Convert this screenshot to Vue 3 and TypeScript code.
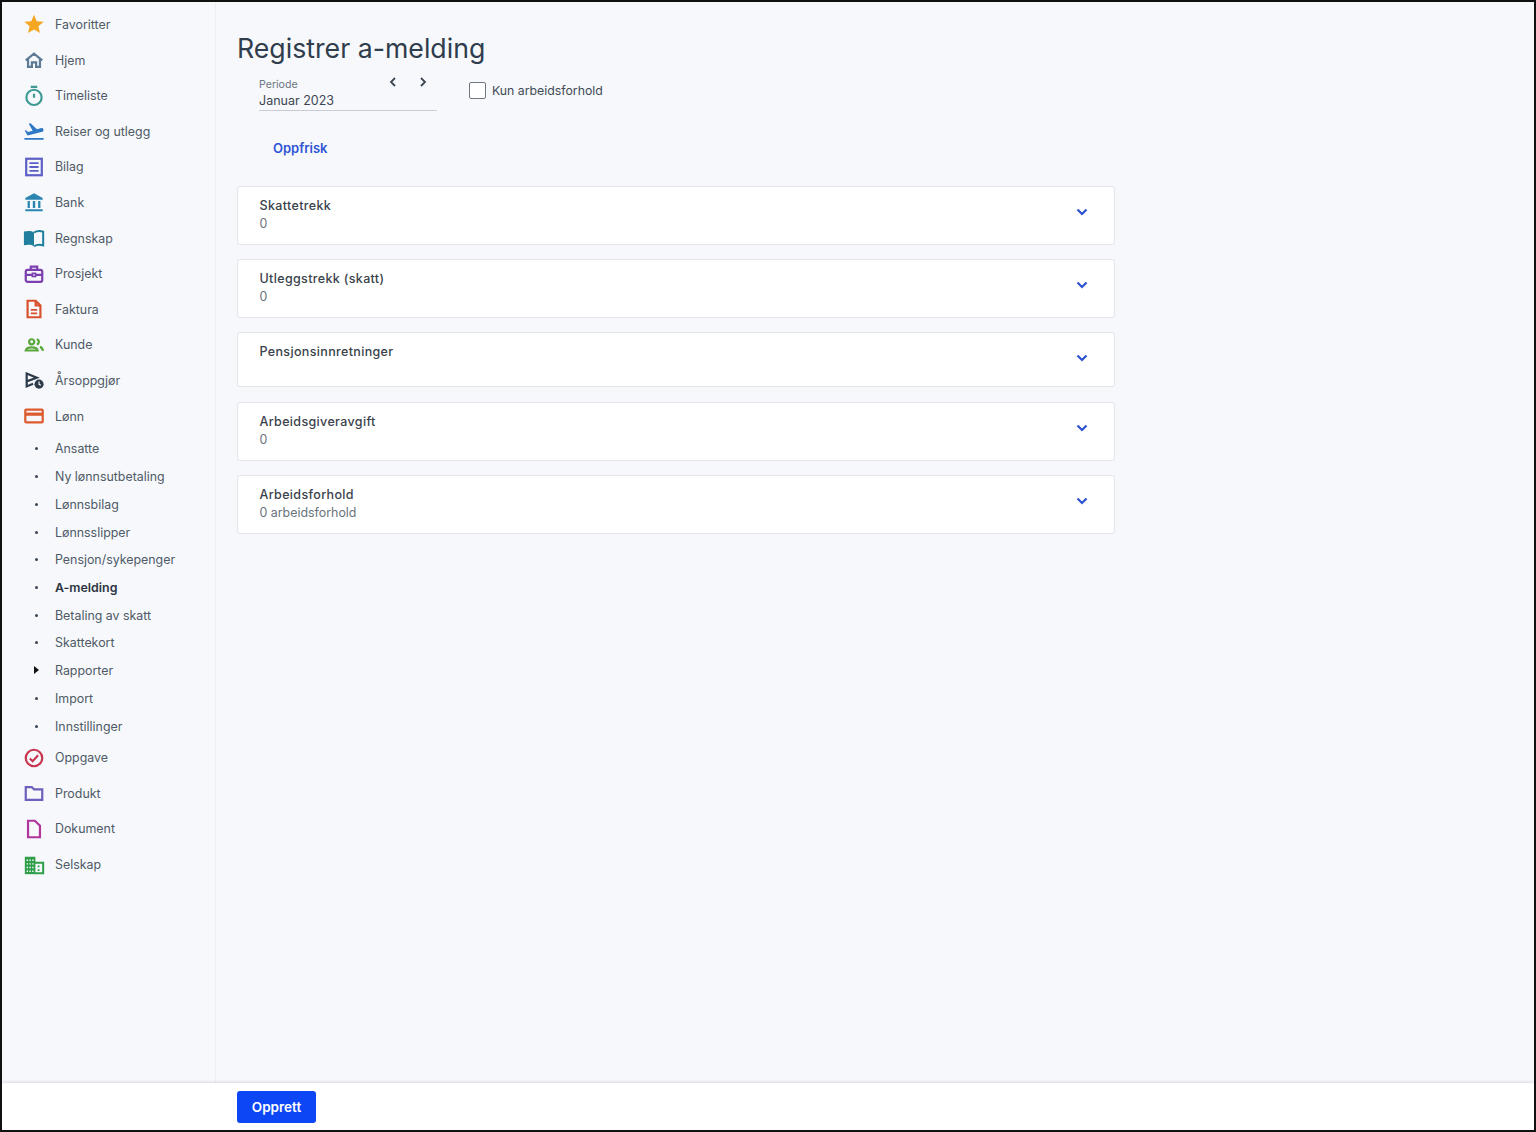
<script setup lang="ts">
interface NavItem { label: string; icon: string; color: string }
const top: NavItem[] = [
  { label: 'Favoritter', icon: 'star', color: '#f5a623' },
  { label: 'Hjem', icon: 'home', color: '#5f7a94' },
  { label: 'Timeliste', icon: 'timer', color: '#3f9a94' },
  { label: 'Reiser og utlegg', icon: 'plane', color: '#2f78c4' },
  { label: 'Bilag', icon: 'doc', color: '#5c5fc4' },
  { label: 'Bank', icon: 'bank', color: '#2a86b0' },
  { label: 'Regnskap', icon: 'book', color: '#1f7f9c' },
  { label: 'Prosjekt', icon: 'case', color: '#7b3fb0' },
  { label: 'Faktura', icon: 'invoice', color: '#d9512c' },
  { label: 'Kunde', icon: 'people', color: '#5aa83c' },
  { label: 'Årsoppgjør', icon: 'year', color: '#2d3a4a' },
  { label: 'Lønn', icon: 'card', color: '#dc5a2e' },
]
const subs = ['Ansatte', 'Ny lønnsutbetaling', 'Lønnsbilag', 'Lønnsslipper', 'Pensjon/sykepenger', 'A-melding', 'Betaling av skatt', 'Skattekort', 'Rapporter', 'Import', 'Innstillinger']
const bottom: NavItem[] = [
  { label: 'Oppgave', icon: 'check', color: '#c8364f' },
  { label: 'Produkt', icon: 'folder', color: '#6c60bd' },
  { label: 'Dokument', icon: 'file', color: '#b0359c' },
  { label: 'Selskap', icon: 'company', color: '#2f9e48' },
]
const panels = [
  { title: 'Skattetrekk', sub: '0' },
  { title: 'Utleggstrekk (skatt)', sub: '0' },
  { title: 'Pensjonsinnretninger', sub: '' },
  { title: 'Arbeidsgiveravgift', sub: '0' },
  { title: 'Arbeidsforhold', sub: '0 arbeidsforhold' },
]
</script>

<template>
  <div class="frame">
    <div class="body">
      <aside class="side">
        <nav class="nav">
          <a v-for="it in top" :key="it.label" class="row">
            <svg class="ico" viewBox="0 0 24 24" :style="{ color: it.color }">
              <path v-if="it.icon === 'star'" fill="currentColor" d="M12 2l3 6.900 7.500.7-5.700 4.900 1.700 7.300L12 17.900 5.500 21.800l1.700-7.300L1.500 9.600l7.500-.7z" />
              <path v-else-if="it.icon === 'home'" fill="none" stroke="currentColor" stroke-width="2.400" d="M3 12.500L12 5l9 7.500M5.500 11v8.500h4.200v-5h4.600v5h4.200V11" />
              <g v-else-if="it.icon === 'timer'" fill="none" stroke="currentColor" stroke-width="2.400">
                <circle cx="12" cy="13.500" r="8.300" /><path d="M8.500 2h7M12 9.500v4.500" />
              </g>
              <path v-else-if="it.icon === 'plane'" fill="currentColor" d="M1.500 19.500h21v2h-21zM22.300 10.500c.3 1-.3 1.900-1.200 2.200L5 17 1.800 11.500l1.500-.4 2.200 1.900 5-1.300L6.300 4.100l1.900-.5 7 6.500 5-1.300c.9-.3 1.900.3 2.100 1.700z" />
              <g v-else-if="it.icon === 'doc'" fill="none" stroke="currentColor" stroke-width="2.400">
                <rect x="3.500" y="3" width="17" height="18" /><path stroke-width="2" d="M7 7.700h10M7 12h10M7 16.300h10" />
              </g>
              <g v-else-if="it.icon === 'bank'" fill="currentColor">
                <path d="M12 2.500L21.500 7.500v2h-19v-2zM2.500 20h19v2h-19zM5 11h2.500v7.500H5zM10.700 11h2.600v7.500h-2.600zM16.500 11H19v7.500h-2.500z" />
              </g>
              <g v-else-if="it.icon === 'book'">
                <path fill="currentColor" d="M1 5C5 4 9 4 12 6v15c-3-2-7-2-11-1z" />
                <path fill="none" stroke="currentColor" stroke-width="2.200" d="M12 6c3-2 7-2 10-1v15c-3-1-7-1-10 1" />
              </g>
              <g v-else-if="it.icon === 'case'" fill="none" stroke="currentColor" stroke-width="2.400">
                <rect x="3" y="7.500" width="18" height="13" rx="2" /><path d="M8.500 7.500V4h7v3.500M3 13h18" /><rect x="10.300" y="11.300" width="3.400" height="3.400" stroke-width="1.800" fill="#f6f8fc" />
              </g>
              <g v-else-if="it.icon === 'invoice'" fill="none" stroke="currentColor" stroke-width="2.400">
                <path d="M5 3h8.800l5.200 5.200V21H5zM13.800 3v5.200H19" /><path stroke-width="2" d="M8.500 13h7M8.500 16.800h7" />
              </g>
              <g v-else-if="it.icon === 'people'" fill="none" stroke="currentColor" stroke-width="2.400">
                <circle cx="9.500" cy="8.500" r="2.800" /><path d="M3 18c.5-2.500 3-3.500 6.500-3.500s6 1 6.500 3.500zM15 5.800a2.800 2.800 0 010 5.500M18.500 14c1.800.6 3 2 3.300 4.500" />
              </g>
              <g v-else-if="it.icon === 'year'">
                <path fill="none" stroke="currentColor" stroke-width="2.400" d="M4 5l11 4.500-11 4zM4 5v14l7-2.800" />
                <circle cx="17.500" cy="16.500" r="5" fill="currentColor" /><path fill="none" stroke="#fff" stroke-width="1.200" d="M17.500 13.700v3l2 1.100" />
              </g>
              <g v-else fill="none" stroke="currentColor" stroke-width="2.400">
                <rect x="2.500" y="5" width="19" height="14" rx="1" /><path stroke-width="3.500" d="M2.500 10h19" />
              </g>
            </svg>
            <span>{{ it.label }}</span>
          </a>
        </nav>
        <ul class="subs">
          <li v-for="s in subs" :key="s" class="sub" :class="{ active: s === 'A-melding', gap: s === 'Import' }">
            <i v-if="s === 'Rapporter'" class="caret"></i>
            <i v-else class="dot"></i>
            <span>{{ s }}</span>
          </li>
        </ul>
        <nav class="nav">
          <a v-for="it in bottom" :key="it.label" class="row">
            <svg class="ico" viewBox="0 0 24 24" :style="{ color: it.color }">
              <g v-if="it.icon === 'check'" fill="none" stroke="currentColor" stroke-width="2.400">
                <circle cx="12" cy="12" r="9" /><path d="M7.500 12.500l3 3 6-6.500" />
              </g>
              <path v-else-if="it.icon === 'folder'" fill="none" stroke="currentColor" stroke-width="2.400" d="M3 5.500h6.500L12 8h9v11.500H3z" />
              <path v-else-if="it.icon === 'file'" fill="none" stroke="currentColor" stroke-width="2.400" d="M5.500 3h7.500l5.500 5.500V21h-13z" />
              <g v-else>
                <path fill="currentColor" d="M2 3h11.500v19H2z" />
                <path fill="#f6f8fc" d="M4 6h1.500v1.500H4zM7 6h1.500v1.500H7zM10 6h1.500v1.500H10zM4 10h1.500v1.500H4zM7 10h1.500v1.500H7zM10 10h1.500v1.500H10zM4 14h1.500v1.500H4zM7 14h1.500v1.500H7zM10 14h1.500v1.500H10zM4 18h1.500v1.500H4zM7 18h1.500v1.500H7zM10 18h1.500v1.500H10z" />
                <path fill="none" stroke="currentColor" stroke-width="2.200" d="M13 9.500h9V21H13" />
                <path fill="currentColor" d="M16 12.500h2v2h-2zM16 16.500h2v2h-2z" />
              </g>
            </svg>
            <span>{{ it.label }}</span>
          </a>
        </nav>
      </aside>
      <main class="main">
        <h1 class="title">Registrer a-melding</h1>
        <div class="filters">
          <div class="period">
            <div class="period-text">
              <label>Periode</label>
              <div class="value">Januar 2023</div>
            </div>
            <div class="arrows">
              <svg viewBox="0 0 12 12"><path d="M8 2L4 6l4 4" /></svg>
              <svg viewBox="0 0 12 12"><path d="M4 2l4 4-4 4" /></svg>
            </div>
          </div>
          <label class="check"><span class="box"></span>Kun arbeidsforhold</label>
        </div>
        <button class="refresh" type="button">Oppfrisk</button>
        <section class="panels">
          <article v-for="p in panels" :key="p.title" class="panel" :class="{ short: !p.sub }">
            <div>
              <h2>{{ p.title }}</h2>
              <p v-if="p.sub">{{ p.sub }}</p>
            </div>
            <svg class="chev" viewBox="0 0 12 8"><path d="M1.500 1.500L6 6l4.500-4.500" /></svg>
          </article>
        </section>
      </main>
    </div>
    <footer class="foot"><button class="create" type="button">Opprett</button></footer>
  </div>
</template>

<style>
html, body { margin: 0; background: #fff; }
</style>

<style scoped>
.frame {
  box-sizing: border-box;
  width: 1536px;
  height: 1132px;
  border: 2px solid #111;
  display: flex;
  flex-direction: column;
  background: #f6f8fc;
  font-family: Inter, "Noto Sans", Roboto, sans-serif;
  font-size: 12.400px;
  color: #4f5a66;
  overflow: hidden;
}
.body { flex: 1; display: flex; min-height: 0; }
.side { width: 214px; box-sizing: border-box; border-right: 1px solid #eceef2; padding-top: 4.700px; flex: none; }
.nav { display: flex; flex-direction: column; }
.row { height: 35.600px; display: flex; align-items: center; padding-left: 21px; gap: 10px; }
.ico { width: 22px; height: 22px; flex: none; }
.subs { list-style: none; margin: 1.300px 0 0; padding: 0; }
.sub { height: 27.700px; display: flex; align-items: center; position: relative; padding-left: 53px; }
.sub.gap { margin-top: .3px; }
.sub.active { color: #2b3440; font-weight: 600; }
.dot { position: absolute; left: 32.500px; width: 3px; height: 3px; border-radius: 50%; background: #3a4653; }
.caret { position: absolute; left: 32px; border-left: 5px solid #111; border-top: 4.500px solid transparent; border-bottom: 4.500px solid transparent; }
.main { flex: 1; padding: 30px 0 0 21px; min-width: 0; }
.title { margin: 0; font-size: 26.700px; font-weight: 400; line-height: 33px; color: #2f3d4c; }
.filters { display: flex; align-items: flex-start; margin-top: 4px; padding-left: 22px; }
.period { width: 178px; height: 42px; box-sizing: border-box; border-bottom: 1px solid #c9ccd2; display: flex; justify-content: space-between; position: relative; }
.period label { display: block; font-size: 10.600px; line-height: 14px; color: #6c7680; margin-top: 9px; }
.value { font-size: 12.500px; line-height: 18px; color: #3c4651; }
.arrows { display: flex; gap: 18px; padding: 7px 8px 0 0; }
.arrows svg { width: 12px; height: 12px; fill: none; stroke: #3c4651; stroke-width: 1.800; }
.check { display: flex; align-items: center; gap: 6px; margin-left: 32px; height: 32px; margin-top: 5px; color: #3f4a55; font-size: 12.300px; }
.box { width: 15px; height: 15px; background: #fff; border: 1px solid #6f7780; border-radius: 2px; }
.refresh { display: block; margin: 22px 0 0 36px; padding: 0; border: 0; background: none; height: 30px; font: 600 13px Inter, sans-serif; color: #2f55d4; }
.panels { display: flex; flex-direction: column; gap: 14px; margin-top: 23px; width: 878px; }
.panel { box-sizing: border-box; height: 59px; background: #fff; border: 1px solid #e3e5ea; border-radius: 3px; padding: 10px 26px 0 21.500px; display: flex; justify-content: space-between; align-items: flex-start; }
.panel.short { height: 55px; margin-bottom: 1px; }
.panel h2 { margin: 0; font-size: 12.500px; line-height: 18px; font-weight: 500; color: #3a424c; letter-spacing: .35px; }
.panel p { margin: 0; line-height: 17.500px; color: #6a737c; }
.chev { width: 12px; height: 8px; margin-top: 10.500px; fill: none; stroke: #2c50d0; stroke-width: 2.200; }
.foot { height: 47px; flex: none; box-sizing: border-box; background: #fff; box-shadow: 0 -1px 3px rgba(0, 0, 0, .12); padding: 8px 0 0 235px; position: relative; }
.create { display: block; width: 79px; height: 32px; border: 0; border-radius: 3px; background: #0d47f5; color: #fff; font: 600 13.500px Inter, sans-serif; padding: 0; }
</style>
